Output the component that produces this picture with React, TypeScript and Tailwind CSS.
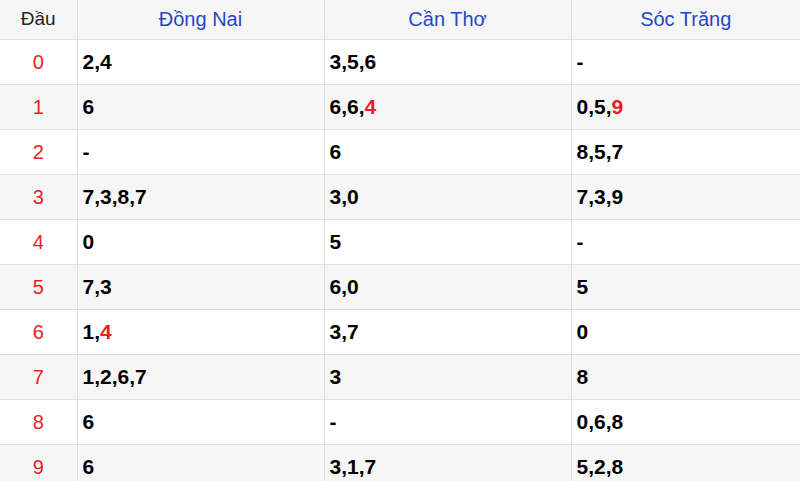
import React from "react";

type Cell = { text: string; hot?: number[] };

const provinces = ["Đồng Nai", "Cần Thơ", "Sóc Trăng"];

// each value: digits joined with ",", hot = indexes of red digits
const rows: Cell[][] = [
  [{ text: "2,4" }, { text: "3,5,6" }, { text: "-" }],
  [{ text: "6" }, { text: "6,6,4", hot: [2] }, { text: "0,5,9", hot: [2] }],
  [{ text: "-" }, { text: "6" }, { text: "8,5,7" }],
  [{ text: "7,3,8,7" }, { text: "3,0" }, { text: "7,3,9" }],
  [{ text: "0" }, { text: "5" }, { text: "-" }],
  [{ text: "7,3" }, { text: "6,0" }, { text: "5" }],
  [{ text: "1,4", hot: [1] }, { text: "3,7" }, { text: "0" }],
  [{ text: "1,2,6,7" }, { text: "3" }, { text: "8" }],
  [{ text: "6" }, { text: "-" }, { text: "0,6,8" }],
  [{ text: "6" }, { text: "3,1,7" }, { text: "5,2,8" }],
];

const Digits = ({ cell }: { cell: Cell }) => {
  const parts = cell.text.split(",");
  return (
    <>
      {parts.map((p, i) => (
        <React.Fragment key={i}>
          <span className={cell.hot?.includes(i) ? "text-[#ee1c25]" : ""}>{p}</span>
          {i < parts.length - 1 && ","}
        </React.Fragment>
      ))}
    </>
  );
};

export default function App() {
  return (
    <div className="w-[800px] h-[481px] overflow-hidden bg-white font-['Liberation_Sans',Arial,sans-serif]">
      <table className="w-[800px] border-collapse table-fixed">
        <colgroup>
          <col className="w-[77px]" />
          <col className="w-[247px]" />
          <col className="w-[247px]" />
          <col className="w-[229px]" />
        </colgroup>
        <thead>
          <tr className="h-[39px] bg-[#f6f6f6]">
            <th className="border-b border-r border-[#dedede] font-normal text-[19px] text-[#222] text-center">Đầu</th>
            {provinces.map((p, i) => (
              <th
                key={p}
                className={`border-b border-[#dedede] font-normal text-[20px] text-[#2646c2] text-center ${i < 2 ? "border-r" : ""}`}
              >
                {p}
              </th>
            ))}
          </tr>
        </thead>
        <tbody>
          {rows.map((r, idx) => (
            <tr key={idx} className={`h-[45px] ${idx % 2 === 1 ? "bg-[#f6f6f6]" : "bg-white"}`}>
              <td className="border-b border-r border-[#dedede] text-center text-[20px] text-[#ee1c25]">{idx}</td>
              {r.map((c, j) => (
                <td
                  key={j}
                  className={`border-b border-[#dedede] pl-[5px] text-[21px] font-bold text-black ${j < 2 ? "border-r" : ""}`}
                >
                  <Digits cell={c} />
                </td>
              ))}
            </tr>
          ))}
        </tbody>
      </table>
    </div>
  );
}
